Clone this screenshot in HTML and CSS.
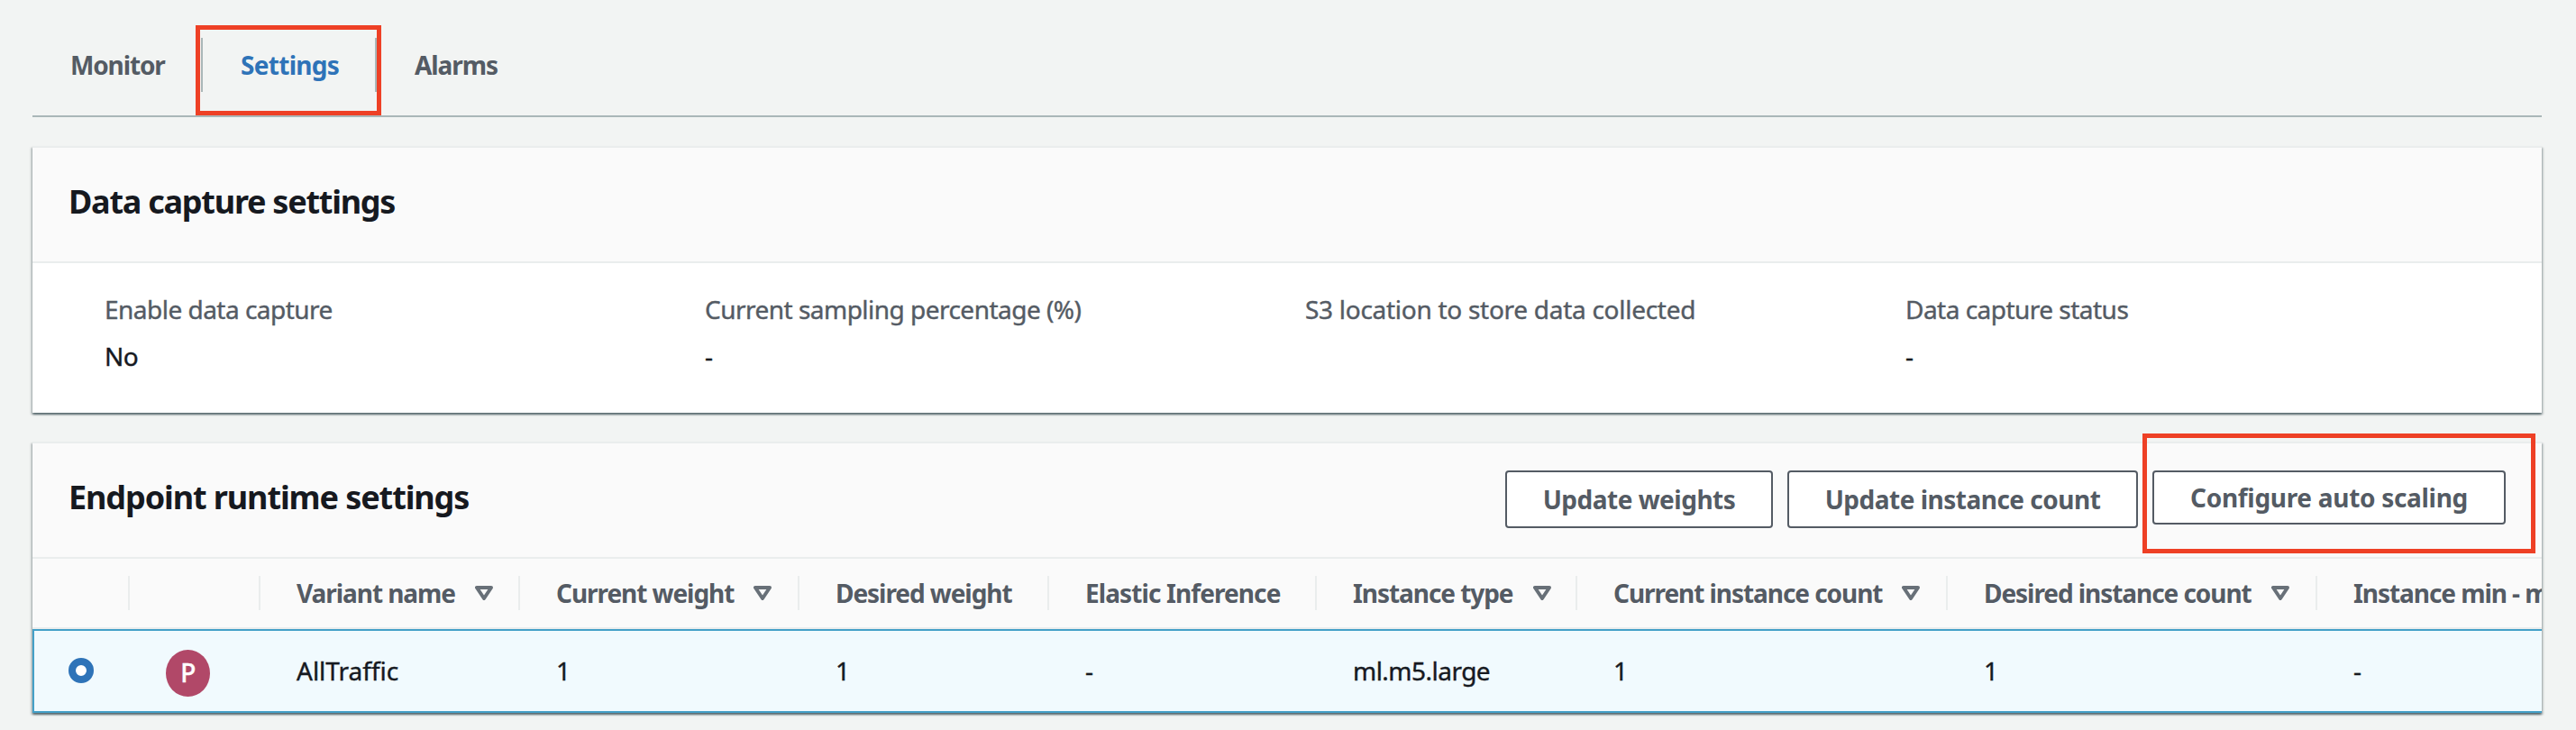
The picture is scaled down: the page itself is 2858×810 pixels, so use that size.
FILE: index.html
```html
<!DOCTYPE html>
<html lang="en">
<head>
<meta charset="utf-8">
<title>Endpoint settings</title>
<link rel="stylesheet" href="styles.css">
</head>
<body>
<nav class="tabs">
  <a class="tab tab-monitor"><span>Monitor</span></a>
  <a class="tab tab-active"><span>Settings</span></a>
  <a class="tab tab-alarms"><span>Alarms</span></a>
  <div class="highlight highlight-tab"></div>
</nav>

<section class="card capture">
  <header class="card-head"><h2>Data capture settings</h2></header>
  <dl class="facts">
    <div><dt>Enable data capture</dt><dd>No</dd></div>
    <div><dt>Current sampling percentage (%)</dt><dd>-</dd></div>
    <div><dt class="wide">S3 location to store data collected</dt><dd></dd></div>
    <div><dt>Data capture status</dt><dd>-</dd></div>
  </dl>
</section>

<section class="card runtime">
  <header class="card-head">
    <h2>Endpoint runtime settings</h2>
    <div class="actions">
      <button class="btn btn-weights">Update weights</button>
      <button class="btn btn-count">Update instance count</button>
      <button class="btn btn-scaling">Configure auto scaling</button>
    </div>
  </header>
  <div class="highlight highlight-scaling"></div>
  <div class="table">
    <div class="row head">
      <div class="cell"></div>
      <div class="cell"></div>
      <div class="cell"><span>Variant name</span><svg class="sort" viewBox="0 0 20 16"><path d="M2 2h16L10 14z"/></svg></div>
      <div class="cell"><span>Current weight</span><svg class="sort" viewBox="0 0 20 16"><path d="M2 2h16L10 14z"/></svg></div>
      <div class="cell"><span>Desired weight</span></div>
      <div class="cell cell-elastic"><span>Elastic Inference</span></div>
      <div class="cell"><span>Instance type</span><svg class="sort" viewBox="0 0 20 16"><path d="M2 2h16L10 14z"/></svg></div>
      <div class="cell"><span>Current instance count</span><svg class="sort" viewBox="0 0 20 16"><path d="M2 2h16L10 14z"/></svg></div>
      <div class="cell"><span>Desired instance count</span><svg class="sort" viewBox="0 0 20 16"><path d="M2 2h16L10 14z"/></svg></div>
      <div class="cell"><span>Instance min - m</span></div>
    </div>
    <div class="row selected">
      <div class="cell"><i class="radio"></i></div>
      <div class="cell"><b class="badge">P</b></div>
      <div class="cell cell-name">AllTraffic</div>
      <div class="cell">1</div>
      <div class="cell">1</div>
      <div class="cell">-</div>
      <div class="cell">ml.m5.large</div>
      <div class="cell">1</div>
      <div class="cell">1</div>
      <div class="cell">-</div>
    </div>
  </div>
</section>
</body>
</html>
```
FILE: styles.css
```css
* { box-sizing: border-box; }

body {
  margin: 0;
  padding: 0 38px 0 36px;
  height: 810px;
  overflow: hidden;
  background: #f2f4f3;
  color: #16191f;
  font: 400 28px/44px "Noto Sans", "Open Sans", sans-serif;
  letter-spacing: -0.52px;
}

.tabs {
  position: relative;
  display: flex;
  align-items: flex-start;
  height: 130px;
  padding-top: 42px;
  border-bottom: 2px solid #aab7b8;
  color: #545b64;
  font-weight: 700;
  letter-spacing: -1.05px;
}
.tab {
  height: 60px;
  line-height: 60px;
  padding-left: 42px;
  white-space: nowrap;
}
.tab-monitor { width: 187px; letter-spacing: -1.15px; }
.tab-active {
  width: 195px;
  border: solid #aab7b8;
  border-width: 0 2px;
  color: #2e73b8;
  letter-spacing: -0.7px;
}

.highlight {
  position: absolute;
  border: 5px solid #ee4025;
}
.highlight-tab { left: 181px; top: 28px; width: 206px; height: 100px; }
.highlight-scaling { left: 2341px; top: -11px; width: 436px; height: 133px; }

.card {
  position: relative;
  background: #fff;
  border-top: 2px solid #eaeded;
  box-shadow: 0 2px 2px rgba(0, 28, 36, .5), 2px 2px 2px rgba(0, 28, 36, .15), -2px 2px 2px rgba(0, 28, 36, .15);
}
.capture { height: 296px; margin-top: 32px; }
.runtime { height: 301px; margin-top: 32px; }

.card-head {
  display: flex;
  justify-content: space-between;
  height: 128px;
  padding: 30px 40px 0 40px;
  background: #fafafa;
  border-bottom: 2px solid #eaeded;
}
h2 {
  margin: 0;
  font-size: 36px;
  line-height: 60px;
  font-weight: 700;
  letter-spacing: -1.25px;
}
.runtime h2 { letter-spacing: -1.1px; }

.facts {
  display: grid;
  grid-template-columns: repeat(4, 666px);
  margin: 0;
  padding: 29px 0 0 80px;
  -webkit-text-stroke: 0.4px;
}
dt { color: #545b64; }
dt.wide { letter-spacing: -0.28px; }
dd { margin: 8px 0 0; }

.actions { display: flex; align-items: flex-start; }
.btn {
  height: 64px;
  margin: 0 0 0 16px;
  padding: 0;
  background: #fff;
  border: 2px solid #545b64;
  border-radius: 4px;
  color: #545b64;
  font: 700 28px/60px "Noto Sans", "Open Sans", sans-serif;
  letter-spacing: -0.5px;
  white-space: nowrap;
}
.btn-weights { width: 297px; }
.btn-count { width: 389px; }
.btn-scaling { width: 392px; height: 60px; line-height: 56px; letter-spacing: -0.3px; }

.table { overflow: hidden; }
.row {
  display: grid;
  grid-template-columns: 108px 145px 288px 310px 277px 297px 289px 411px 410px 400px;
  width: 2784px;
}
.cell {
  display: flex;
  align-items: center;
  padding-left: 40px;
  white-space: nowrap;
}
.head {
  height: 78px;
  background: #fafafa;
  border-bottom: 2px solid #eaeded;
  color: #545b64;
  font-weight: 700;
  letter-spacing: -1.06px;
}
.head .cell {
  height: 38px;
  margin-top: 19px;
  border-right: 2px solid #eaeded;
}
.head .cell:last-child { border-right: 0; }
.head .cell-elastic { letter-spacing: -0.9px; }
.sort {
  width: 20px;
  height: 16px;
  margin-left: 22px;
  fill: none;
  stroke: #687078;
  stroke-width: 4;
  stroke-linejoin: round;
}
.selected {
  height: 93px;
  background: #f1fafe;
  border: solid #44a0c8;
  border-width: 2px 0 2px 2px;
  -webkit-text-stroke: 0.4px;
}
.selected .cell { margin-left: -2px; margin-right: 2px; padding-bottom: 1px; }
.selected .cell-name { letter-spacing: 0; }
.radio {
  width: 28px;
  height: 28px;
  border: 8px solid #2e73b8;
  border-radius: 50%;
  background: #fff;
}
.badge {
  width: 49px;
  height: 52px;
  margin-top: 5px;
  border-radius: 50%;
  background: #b14868;
  color: #fff;
  font-weight: 500;
  line-height: 51px;
  text-align: center;
}
```
